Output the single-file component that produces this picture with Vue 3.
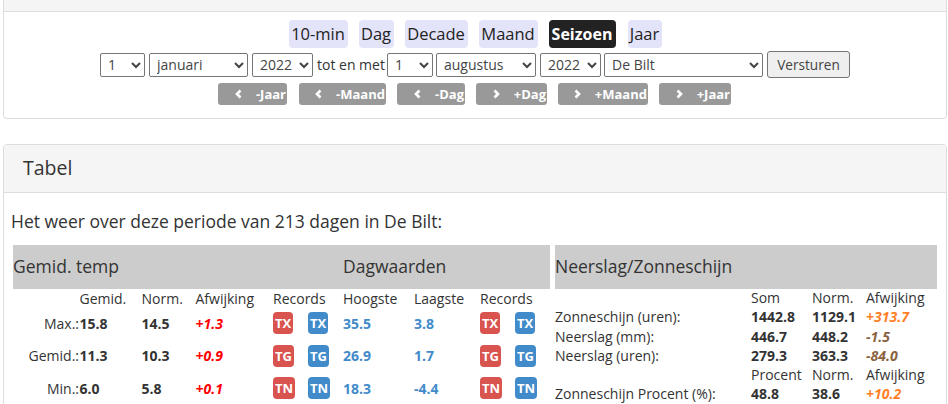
<script setup>
const periods = [
  { label: '10-min', width: 59 },
  { label: 'Dag', width: 35 },
  { label: 'Decade', width: 63 },
  { label: 'Maand', width: 59 },
  { label: 'Seizoen', width: 67, active: true },
  { label: 'Jaar', width: 34 }
];

const selects = [
  { cls: 'sel-day', value: '1', options: ['1', '2', '3'] },
  { cls: 'sel-month', value: 'januari', options: ['januari', 'februari', 'maart'] },
  { cls: 'sel-year', value: '2022', options: ['2021', '2022'] }
];
const selectsEnd = [
  { cls: 'sel-day-end', value: '1', options: ['1', '2', '3'] },
  { cls: 'sel-month-end', value: 'augustus', options: ['juli', 'augustus', 'september'] },
  { cls: 'sel-year', value: '2022', options: ['2021', '2022'] },
  { cls: 'sel-station', value: 'De Bilt', options: ['De Bilt', 'Eelde', 'Maastricht'] }
];

const steps = [
  { label: '-Jaar', dir: 'prev', width: 69 },
  { label: '-Maand', dir: 'prev', width: 87 },
  { label: '-Dag', dir: 'prev', width: 68 },
  { label: '+Dag', dir: 'next', width: 71 },
  { label: '+Maand', dir: 'next', width: 90 },
  { label: '+Jaar', dir: 'next', width: 72 }
];

const tempRows = [
  { label: 'Max.:', avg: '15.8', norm: '14.5', diff: '+1.3', code: 'TX', high: '35.5', low: '3.8' },
  { label: 'Gemid.:', avg: '11.3', norm: '10.3', diff: '+0.9', code: 'TG', high: '26.9', low: '1.7' },
  { label: 'Min.:', avg: '6.0', norm: '5.8', diff: '+0.1', code: 'TN', high: '18.3', low: '-4.4' }
];

const sunRows = [
  { head: true, a: 'Som', b: 'Norm.', c: 'Afwijking' },
  { label: 'Zonneschijn (uren):', a: '1442.8', b: '1129.1', c: '+313.7', tone: 'warm' },
  { label: 'Neerslag (mm):', a: '446.7', b: '448.2', c: '-1.5', tone: 'dry' },
  { label: 'Neerslag (uren):', a: '279.3', b: '363.3', c: '-84.0', tone: 'dry' },
  { head: true, a: 'Procent', b: 'Norm.', c: 'Afwijking' },
  { label: 'Zonneschijn Procent (%):', a: '48.8', b: '38.6', c: '+10.2', tone: 'warm' }
];
</script>

<template>
  <div class="page">
    <section class="panel panel-top">
      <div class="panel-head-cut"></div>
      <div class="panel-form">
        <div class="periods">
          <a v-for="p in periods" :key="p.label" :class="['period', { active: p.active }]" :style="{ width: p.width + 'px' }">{{ p.label }}</a>
        </div>
        <div class="filters">
          <select v-for="(s, i) in selects" :key="i" :class="s.cls" :value="s.value">
            <option v-for="o in s.options" :key="o">{{ o }}</option>
          </select>
          <span class="until">tot en met</span>
          <select v-for="(s, i) in selectsEnd" :key="'e' + i" :class="s.cls" :value="s.value">
            <option v-for="o in s.options" :key="o">{{ o }}</option>
          </select>
          <button class="submit">Versturen</button>
        </div>
        <div class="steps">
          <a v-for="s in steps" :key="s.label" class="step" :style="{ width: s.width + 'px' }">
            <svg width="9" height="10" viewBox="0 0 9 10">
              <path v-if="s.dir === 'prev'" d="M6.5 1.5 L3 5 L6.5 8.5" fill="none" stroke="#fff" stroke-width="2.6" />
              <path v-else d="M2.5 1.5 L6 5 L2.5 8.5" fill="none" stroke="#fff" stroke-width="2.6" />
            </svg>
            <span>{{ s.label }}</span>
          </a>
        </div>
      </div>
    </section>

    <section class="panel panel-table">
      <h3 class="panel-title">Tabel</h3>
      <div class="panel-body">
        <p class="intro">Het weer over deze periode van 213 dagen in De Bilt:</p>
        <div class="tables">
          <div class="temp">
            <div class="band">
              <span class="band-left">Gemid. temp</span>
              <span>Dagwaarden</span>
            </div>
            <div class="temp-row temp-head">
              <span></span>
              <span>Gemid.</span>
              <span>Norm.</span>
              <span>Afwijking</span>
              <span class="span2">Records</span>
              <span>Hoogste</span>
              <span>Laagste</span>
              <span class="span2">Records</span>
            </div>
            <div v-for="r in tempRows" :key="r.code" class="temp-row temp-data">
              <span class="row-label">{{ r.label }}</span>
              <b>{{ r.avg }}</b>
              <b>{{ r.norm }}</b>
              <b class="diff-hot">{{ r.diff }}</b>
              <span><i class="badge red">{{ r.code }}</i></span>
              <span><i class="badge blue">{{ r.code }}</i></span>
              <b class="val-blue">{{ r.high }}</b>
              <b class="val-blue">{{ r.low }}</b>
              <span><i class="badge red">{{ r.code }}</i></span>
              <span><i class="badge blue">{{ r.code }}</i></span>
            </div>
          </div>

          <div class="sun">
            <div class="band">Neerslag/Zonneschijn</div>
            <div class="sun-rows">
              <div v-for="(r, i) in sunRows" :key="i" :class="['sun-row', { 'sun-head': r.head }]">
                <span>{{ r.label }}</span>
                <span class="num">{{ r.a }}</span>
                <span class="num">{{ r.b }}</span>
                <span :class="['num', r.tone]">{{ r.c }}</span>
              </div>
            </div>
          </div>
        </div>
      </div>
    </section>
  </div>
</template>

<style scoped>
.page {
  width: 948px;
  height: 404px;
  overflow: hidden;
  padding: 0 1px 0 3px;
  box-sizing: border-box;
  font-family: "Open Sans", sans-serif;
  font-size: 14px;
  color: #333;
}

.panel {
  background: #fff;
  border: 1px solid #ddd;
  border-radius: 4px;
  box-sizing: border-box;
}

.panel-top {
  height: 119px;
  border-top: none;
  border-radius: 0 0 4px 4px;
  margin-bottom: 25px;
}

.panel-head-cut {
  height: 11px;
  background: #f5f5f5;
  border-bottom: 1px solid #ddd;
}

.panel-form {
  display: flex;
  flex-direction: column;
  align-items: center;
}

.periods {
  display: flex;
  gap: 11px;
  margin-top: 8px;
  height: 28px;
}

.period {
  text-align: center;
  white-space: nowrap;
  line-height: 28px;
  font-size: 16.5px;
  border-radius: 4px;
  background: #e3e3fa;
  color: #222;
}

.period.active {
  background: #222;
  color: #fff;
  font-size: 16px;
  font-weight: 700;
  margin-right: 1px;
}

.filters {
  display: flex;
  align-items: center;
  height: 27px;
  margin-top: 3px;
  gap: 4px;
}

select {
  height: 24px;
  padding: 0 0 0 3px;
  font-family: inherit;
  font-size: 14px;
  color: #444;
  background: #fff;
  border: 1px solid #767676;
  border-radius: 2px;
  box-sizing: border-box;
  margin: 0;
}

.sel-day { width: 45px; }
.sel-month { width: 99px; }
.sel-year { width: 61px; }
.sel-day-end { width: 46px; }
.sel-month-end { width: 100px; margin-left: -1px; }
.sel-station { width: 159px; margin-left: -1px; }

.until {
  width: 66px;
  white-space: nowrap;
  color: #333;
}

.submit {
  width: 83px;
  height: 27px;
  padding: 0;
  font-family: inherit;
  font-size: 13.6px;
  color: #444;
  background: #efefef;
  border: 1px solid #767676;
  border-radius: 3px;
}

.steps {
  display: flex;
  gap: 11px;
  margin-top: 5px;
  padding-right: 1px;
}

.step:first-child {
  margin-right: 1px;
}

.step {
  height: 22px;
  box-sizing: border-box;
  display: flex;
  align-items: center;
  justify-content: flex-end;
  gap: 13px;
  padding-right: 1px;
  font-size: 13px;
  font-weight: 700;
  color: #fff;
  background: #999;
  border-radius: 3px;
}

.panel-title {
  margin: 0;
  height: 48px;
  padding-left: 19px;
  line-height: 45px;
  font-size: 19.5px;
  font-weight: 400;
  background: #f5f5f5;
  border-bottom: 1px solid #ddd;
  border-radius: 3px 3px 0 0;
  box-sizing: border-box;
}

.panel-body {
  padding: 14px 9px 0 9px;
}

.intro {
  margin: 0 0 10px -2px;
  font-size: 17.5px;
  line-height: 28px;
}

.tables {
  display: flex;
  gap: 5px;
}

.band {
  height: 44px;
  background: #ccc;
  font-size: 17.5px;
  line-height: 42px;
  display: flex;
}

.band-left {
  width: 330px;
}

.temp {
  width: 537px;
}

.temp-row {
  display: grid;
  grid-template-columns: 66.5px 62px 54px 77.5px 35px 35px 71px 66px 35px 35px;
  align-items: center;
}

.temp-head {
  height: 18px;
}

.span2 {
  grid-column: span 2;
}

.temp-data {
  height: 32.5px;
}

.row-label {
  text-align: right;
  padding-right: 0.5px;
}

.temp-data b {
  font-weight: 700;
}

.diff-hot {
  color: #f00;
  font-style: italic;
}

.val-blue {
  color: #428bca;
}

.badge {
  display: inline-block;
  padding: 0 2px;
  height: 22px;
  line-height: 22px;
  font-size: 13px;
  font-style: normal;
  font-weight: 700;
  color: #fff;
  border-radius: 4px;
  vertical-align: middle;
}

.red { background: #d9534f; }
.blue { background: #428bca; }

.sun {
  width: 382px;
  border-bottom: 1px solid #bbb;
}

.sun .band {
  display: block;
}

.sun-rows {
  height: 115px;
  margin-top: -1px;
}

.sun-row {
  display: grid;
  grid-template-columns: 196px 61px 54px 71px;
  height: 19.3px;
  line-height: 19.3px;
}

.sun-row:not(.sun-head) .num {
  font-weight: 700;
}

.warm {
  color: #ff7f27;
  font-style: italic;
}

.dry {
  color: #8a6240;
  font-style: italic;
}
</style>

<style>
html, body {
  margin: 0;
  overflow: hidden;
}
</style>
